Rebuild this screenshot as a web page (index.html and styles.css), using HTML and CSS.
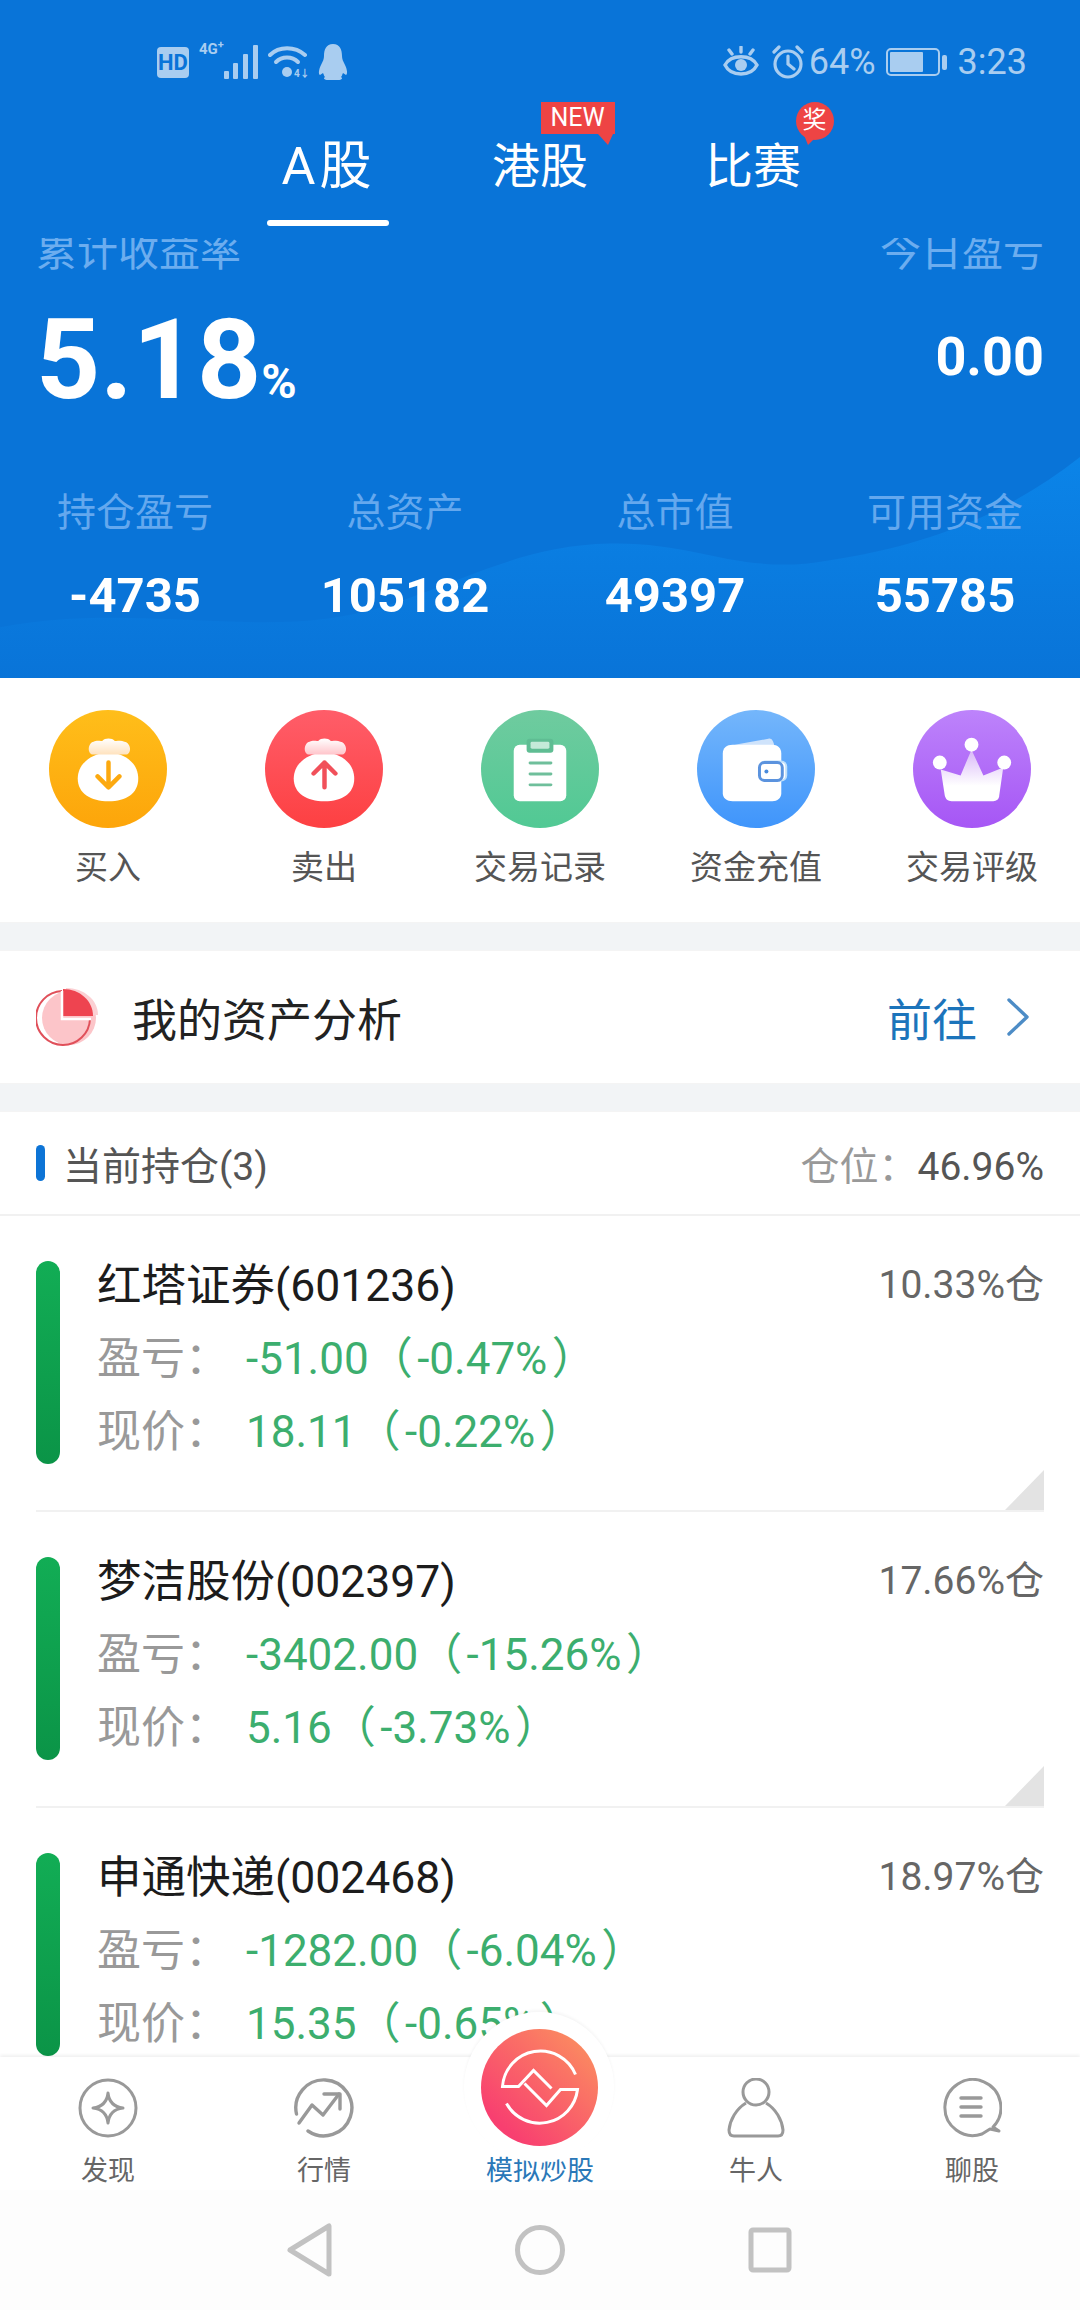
FILE: index.html
```html
<!DOCTYPE html>
<html lang="zh-CN">
<head>
<meta charset="utf-8">
<title>模拟炒股</title>
<link rel="stylesheet" href="styles.css">
</head>
<body>
<div class="app">
  <header class="top">
    <div class="status">
      <div class="status-left">
        <span class="hd">HD</span>
        <div class="net">
          <span class="g4">4G<sup>+</sup></span>
          <svg class="bars" viewBox="0 0 34 34"><g fill="#a9cdf0"><rect x="0" y="26" width="5" height="8" rx="1"/><rect x="9" y="18" width="5" height="16" rx="1"/><rect x="19" y="9" width="5" height="25" rx="1"/><rect x="29" y="0" width="5" height="34" rx="1"/></g></svg>
        </div>
        <svg class="wifi" viewBox="0 0 40 32"><g fill="none" stroke="#a9cdf0" stroke-width="4" stroke-linecap="round"><path d="M2 9C11 0 27 0 37 9"/><path d="M8 16C14 10 24 10 30 16"/></g><circle cx="19" cy="26" r="5" fill="#a9cdf0"/><text x="26" y="31" class="wifi-t">4↓</text></svg>
        <svg class="qq" viewBox="0 0 30 36"><path fill="#a9cdf0" d="M15 0C8 0 6 6 6 12C6 15 5 17 3 21C1 25 0 30 2 31L5 29C6 31 6 32 7 33C5 34 6 36 10 36H20C24 36 25 34 23 33C24 32 24 31 25 29L28 31C30 30 29 25 27 21C25 17 24 15 24 12C24 6 22 0 15 0Z"/></svg>
      </div>
      <div class="status-right">
        <svg class="eye" viewBox="0 0 36 32"><g fill="none" stroke="#a9cdf0" stroke-width="3.4" stroke-linecap="round"><path d="M2 19C8 8 28 8 34 19C28 31 8 31 2 19Z"/><path d="M18 1V6M6 4L9 8M30 4L27 8"/></g><circle cx="18" cy="19" r="6" fill="#a9cdf0"/></svg>
        <svg class="alarm" viewBox="0 0 34 34"><g fill="none" stroke="#a9cdf0" stroke-width="3.2" stroke-linecap="round"><circle cx="17" cy="19" r="13"/><path d="M17 11V19L23 24M3 7L8 2M31 7L26 2"/></g></svg>
        <span class="pct">64%</span>
        <div class="batt"><span class="batt-fill"></span></div>
        <span class="batt-nub"></span>
        <span class="clock">3:23</span>
      </div>
    </div>
    <nav class="tabs">
      <a class="tab tab-on">A股</a>
      <a class="tab">港股<span class="badge-new">NEW</span></a>
      <a class="tab">比赛<span class="badge-prize">奖</span></a>
    </nav>
  </header>

  <main class="scroll">
    <section class="hero">
      <svg class="wave" viewBox="0 0 1080 240" preserveAspectRatio="none">
        <defs><linearGradient id="wv" x1="0" y1="0" x2="0" y2="1"><stop offset="0" stop-color="#0b84e8"/><stop offset="1" stop-color="#0974d8"/></linearGradient></defs>
        <path fill="url(#wv)" d="M0 185C120 160 230 190 330 175C430 160 500 96 610 94C700 92 740 130 830 112C930 96 1010 60 1080 0V240H0Z"/>
      </svg>
      <div class="summary">
        <div class="sum-col">
          <div class="sum-label">累计收益率</div>
          <div class="sum-big">5.18<small>%</small></div>
        </div>
        <div class="sum-col sum-right">
          <div class="sum-label">今日盈亏</div>
          <div class="sum-val">0.00</div>
        </div>
      </div>
      <div class="stats">
        <div class="stat"><span class="stat-label">持仓盈亏</span><b class="stat-val">-4735</b></div>
        <div class="stat"><span class="stat-label">总资产</span><b class="stat-val">105182</b></div>
        <div class="stat"><span class="stat-label">总市值</span><b class="stat-val">49397</b></div>
        <div class="stat"><span class="stat-label">可用资金</span><b class="stat-val">55785</b></div>
      </div>
    </section>

    <section class="actions">
      <div class="action">
        <svg class="action-ic" viewBox="0 0 119 119">
          <defs>
            <linearGradient id="gY" x1="0" y1="0" x2="0" y2="1"><stop offset="0" stop-color="#ffbe1a"/><stop offset="1" stop-color="#fda50a"/></linearGradient>
            <linearGradient id="gK" x1="0" y1="0" x2="0" y2="1"><stop offset="0" stop-color="#fff"/><stop offset="1" stop-color="#ffe2bd"/></linearGradient>
          </defs>
          <circle cx="59.5" cy="59.5" r="59.5" fill="url(#gY)"/>
          <path fill="#fff" d="M60 43C42 43 29 55 29 69C29 84 42 92 60 92C78 92 90 84 90 69C90 55 78 43 60 43Z"/>
          <path fill="url(#gK)" d="M45 32C49 30 52 32 54 31C56 28 64 28 66 31C68 32 72 30 76 32C83 33 84 45 77 45H45C38 45 39 33 45 32Z"/>
          <path fill="none" stroke="#fca90f" stroke-width="4.5" stroke-linecap="round" stroke-linejoin="round" d="M60 53V78M49 67L60 78L71 67"/>
        </svg>
        <span class="action-t">买入</span>
      </div>
      <div class="action">
        <svg class="action-ic" viewBox="0 0 119 119">
          <defs>
            <linearGradient id="gR" x1="0" y1="0" x2="0" y2="1"><stop offset="0" stop-color="#ff5d69"/><stop offset="1" stop-color="#fd4042"/></linearGradient>
            <linearGradient id="gK2" x1="0" y1="0" x2="0" y2="1"><stop offset="0" stop-color="#fff"/><stop offset="1" stop-color="#ffc4ca"/></linearGradient>
          </defs>
          <circle cx="59.5" cy="59.5" r="59.5" fill="url(#gR)"/>
          <path fill="#fff" d="M60 43C42 43 29 55 29 69C29 84 42 92 60 92C78 92 90 84 90 69C90 55 78 43 60 43Z"/>
          <path fill="url(#gK2)" d="M45 32C49 30 52 32 54 31C56 28 64 28 66 31C68 32 72 30 76 32C83 33 84 45 77 45H45C38 45 39 33 45 32Z"/>
          <path fill="none" stroke="#f1505a" stroke-width="4.5" stroke-linecap="round" stroke-linejoin="round" d="M60 78V53M49 64L60 53L71 64"/>
        </svg>
        <span class="action-t">卖出</span>
      </div>
      <div class="action">
        <svg class="action-ic" viewBox="0 0 119 119">
          <defs><linearGradient id="gG" x1="0" y1="0" x2="0" y2="1"><stop offset="0" stop-color="#6fcb9f"/><stop offset="1" stop-color="#51c994"/></linearGradient></defs>
          <circle cx="59.5" cy="59.5" r="59.5" fill="url(#gG)"/>
          <rect x="33" y="35" width="53" height="57" rx="6" fill="#fff"/>
          <rect x="46" y="29" width="27" height="14" rx="3" fill="#5fbd93"/>
          <rect x="50" y="32" width="19" height="7" rx="1.5" fill="#c4ead8"/>
          <g fill="#6fbf9b"><rect x="48" y="52" width="24" height="3" rx="1.5"/><rect x="48" y="63" width="24" height="3" rx="1.5"/><rect x="48" y="74" width="24" height="3" rx="1.5"/></g>
        </svg>
        <span class="action-t">交易记录</span>
      </div>
      <div class="action">
        <svg class="action-ic" viewBox="0 0 119 119">
          <defs>
            <linearGradient id="gB" x1="0" y1="0" x2="0" y2="1"><stop offset="0" stop-color="#74b6fb"/><stop offset="1" stop-color="#3f95fb"/></linearGradient>
          </defs>
          <circle cx="59.5" cy="59.5" r="59.5" fill="url(#gB)"/>
          <path fill="#cfe3fb" d="M38 35L72 29C75 28 77 31 78 36Z"/>
          <path fill="#fff" d="M36 35H76C81 35 85 38 85 44V84C85 89 81 92 76 92H36C30 92 26 89 26 84V44C26 38 30 35 36 35Z"/>
          <rect x="64" y="52" width="26" height="19" rx="5" fill="#fff" stroke="#bfe0fb" stroke-width="2"/>
          <rect x="63" y="53" width="23" height="18" rx="5" fill="#fff" stroke="#5b93de" stroke-width="3"/>
          <circle cx="70" cy="62" r="2" fill="#4a8bdc"/>
        </svg>
        <span class="action-t">资金充值</span>
      </div>
      <div class="action">
        <svg class="action-ic" viewBox="0 0 119 119">
          <defs>
            <linearGradient id="gP" x1="0" y1="0" x2="0" y2="1"><stop offset="0" stop-color="#bd83fb"/><stop offset="1" stop-color="#a656f5"/></linearGradient>
            <linearGradient id="gC" x1="0" y1="0" x2="0" y2="1"><stop offset="0" stop-color="#d8b6f8"/><stop offset="0.7" stop-color="#fff"/></linearGradient>
          </defs>
          <circle cx="59.5" cy="59.5" r="59.5" fill="url(#gP)"/>
          <path fill="url(#gC)" d="M28 60L48 66L59 40L71 66L91 58L87 86C87 90 84 92 81 92H39C35 92 33 90 32 86Z"/>
          <g fill="#fff"><circle cx="59" cy="35" r="7"/><circle cx="27" cy="53" r="7"/><circle cx="92" cy="53" r="7"/></g>
        </svg>
        <span class="action-t">交易评级</span>
      </div>
    </section>

    <div class="gap"></div>

    <section class="analysis">
      <svg class="pie" viewBox="0 0 62 58">
        <circle cx="33" cy="30" r="27" fill="#fcc5c9"/>
        <path fill="none" stroke="#e0505a" stroke-width="2" d="M26 3A27 27 0 1 0 54 31"/>
        <path fill="#fbd0d3" d="M30 0C48 0 62 12 62 27H30Z"/>
        <path fill="#ee4450" d="M27 1C44 1 57 13 57 28H27Z"/>
        <path fill="none" stroke="#fff" stroke-width="2.5" d="M26 3V31H55"/>
      </svg>
      <span class="analysis-t">我的资产分析</span>
      <a class="go">前往
        <svg class="chev" viewBox="0 0 24 38"><path fill="none" stroke="#4d8cc6" stroke-width="3.4" stroke-linecap="round" stroke-linejoin="round" d="M3 2L21 19L3 36"/></svg>
      </a>
    </section>

    <div class="gap"></div>

    <section class="pos-head">
      <span class="pos-mark"></span>
      <span class="pos-title">当前持仓(3)</span>
      <span class="pos-ratio">仓位：<em>46.96%</em></span>
    </section>

    <article class="item">
      <span class="item-bar"></span>
      <div class="item-info">
        <div class="item-name">红塔证券(601236)</div>
        <div class="item-row"><span class="item-k">盈亏：</span><span class="item-v">-51.00（&#8202;-0.47%&#8202;）</span></div>
        <div class="item-row"><span class="item-k">现价：</span><span class="item-v">18.11（&#8202;-0.22%&#8202;）</span></div>
      </div>
      <span class="item-share">10.33%仓</span>
      <span class="item-corner"></span>
    </article>
    <article class="item">
      <span class="item-bar"></span>
      <div class="item-info">
        <div class="item-name">梦洁股份(002397)</div>
        <div class="item-row"><span class="item-k">盈亏：</span><span class="item-v">-3402.00（&#8202;-15.26%&#8202;）</span></div>
        <div class="item-row"><span class="item-k">现价：</span><span class="item-v">5.16（&#8202;-3.73%&#8202;）</span></div>
      </div>
      <span class="item-share">17.66%仓</span>
      <span class="item-corner"></span>
    </article>
    <article class="item">
      <span class="item-bar"></span>
      <div class="item-info">
        <div class="item-name">申通快递(002468)</div>
        <div class="item-row"><span class="item-k">盈亏：</span><span class="item-v">-1282.00（&#8202;-6.04%&#8202;）</span></div>
        <div class="item-row"><span class="item-k">现价：</span><span class="item-v">15.35（&#8202;-0.65%&#8202;）</span></div>
      </div>
      <span class="item-share">18.97%仓</span>
      <span class="item-corner"></span>
    </article>
  </main>

  <footer class="tabbar">
    <div class="nav-item">
      <svg class="nav-ic" viewBox="0 0 60 60"><g fill="none" stroke="#999" stroke-width="3"><circle cx="30" cy="30" r="28"/><path stroke-linejoin="round" d="M30 15C31 24 36 29 45 30C36 31 31 36 30 45C29 36 24 31 15 30C24 29 29 24 30 15Z"/></g></svg>
      <span class="nav-t">发现</span>
    </div>
    <div class="nav-item">
      <svg class="nav-ic" viewBox="0 0 60 60"><g fill="none" stroke="#999" stroke-width="3.4" stroke-linecap="round" stroke-linejoin="round"><path d="M2.5 36A28 28 0 1 1 14 53"/><path d="M5 45L18 27L29 37L45 16"/><path d="M30 16H46V31"/></g></svg>
      <span class="nav-t">行情</span>
    </div>
    <div class="nav-item">
      <span class="nav-ic"></span>
      <span class="nav-t nav-on">模拟炒股</span>
    </div>
    <div class="nav-item">
      <svg class="nav-ic" viewBox="0 0 60 60"><g fill="none" stroke="#999" stroke-width="3" stroke-linejoin="round"><ellipse cx="30" cy="14" rx="13" ry="13"/><path d="M20 25C10 31 4 42 3 52C3 56 5 58 8 58H52C55 58 57 56 57 52C56 42 50 31 40 25"/></g></svg>
      <span class="nav-t">牛人</span>
    </div>
    <div class="nav-item">
      <svg class="nav-ic" viewBox="0 0 60 60"><g fill="none" stroke="#999" stroke-width="3" stroke-linecap="round" stroke-linejoin="round"><path d="M57 53L51 49A28 28 0 1 0 40 56L48 51Z"/><path d="M19 20H39M19 29H39M19 38H39" stroke-width="3.4"/></g></svg>
      <span class="nav-t">聊股</span>
    </div>
    <div class="hub">
      <svg class="hub-ic" viewBox="-58.5 -58.5 117 117">
        <defs><linearGradient id="gH" x1="0.9" y1="0.1" x2="0.2" y2="0.85"><stop offset="0" stop-color="#fb8c60"/><stop offset="1" stop-color="#f83f70"/></linearGradient></defs>
        <circle r="58.5" fill="url(#gH)"/>
        <g fill="none" stroke="#fff" stroke-width="3"><path d="M36 -13A38 38 0 0 0 -37 -1H-21L-6 -17L12 1"/><path d="M-33 16A38 38 0 0 0 38 2H21L7 18L-15 -4"/></g>
      </svg>
    </div>
  </footer>

  <div class="sysnav">
    <svg class="sys-ic" viewBox="0 0 60 60"><path fill="none" stroke="#c2c2c2" stroke-width="5" stroke-linejoin="round" d="M49 6V54L10 30Z"/></svg>
    <svg class="sys-ic" viewBox="0 0 60 60"><circle cx="30" cy="30" r="22.5" fill="none" stroke="#c2c2c2" stroke-width="5"/></svg>
    <svg class="sys-ic" viewBox="0 0 60 60"><rect x="11" y="10" width="38" height="40" rx="2" fill="none" stroke="#c2c2c2" stroke-width="5"/></svg>
  </div>
</div>
</body>
</html>
```

FILE: styles.css
```css
* { box-sizing: border-box; }
html, body { margin: 0; padding: 0; }
body { width: 1080px; height: 2310px; overflow: hidden; background: #fff; font-family: Roboto, "Noto Sans CJK SC", sans-serif; }
.app { width: 1080px; height: 2310px; display: flex; flex-direction: column; overflow: hidden; }

.top { height: 238px; flex: none; background: #0974d8; position: relative; z-index: 2; }
.status { height: 90px; padding: 34px 53px 0 157px; display: flex; justify-content: space-between; align-items: center; color: #a9cdf0; }
.status-left, .status-right { display: flex; align-items: center; }
.hd { width: 32px; height: 31px; border-radius: 4px; background: #a9cdf0; color: #0974d8; font: 700 22px/31px Roboto, sans-serif; text-align: center; }
.net { position: relative; width: 69px; height: 34px; margin-left: 0; }
.g4 { position: absolute; left: 10px; top: -4px; font: 700 15px/16px Roboto, sans-serif; color: #a9cdf0; }
.g4 sup { font-size: 11px; line-height: 0; }
.bars { position: absolute; left: 35px; top: 0; width: 34px; height: 34px; }
.wifi { width: 40px; height: 32px; margin-left: 10px; }
.wifi-t { font: 700 10px Roboto, "Noto Sans CJK SC", sans-serif; fill: #a9cdf0; }
.qq { width: 30px; height: 36px; margin-left: 10px; }
.eye { width: 36px; height: 32px; }
.alarm { width: 34px; height: 34px; margin-left: 12px; }
.pct { font: 400 36px/40px Roboto, sans-serif; margin-left: 4px; }
.batt { width: 54px; height: 28px; border: 2px solid #a9cdf0; border-radius: 5px; padding: 2px; margin-left: 10px; }
.batt-fill { display: block; width: 33px; height: 20px; background: #a9cdf0; border-radius: 1px; }
.batt-nub { width: 5px; height: 15px; background: #a9cdf0; border-radius: 2px; margin-left: 2px; }
.clock { font: 400 36px/40px Roboto, sans-serif; margin-left: 11px; }

.tabs { display: flex; justify-content: center; height: 148px; }
.tab { position: relative; width: 213px; height: 136px; padding-top: 47px; text-align: center; font-size: 48px; line-height: 60px; color: #fff; }
.tab-on { padding-left: 3px; font-size: 52px; letter-spacing: 4px; }
.tab-on::after { content: ""; position: absolute; left: 46px; right: 45px; bottom: 0; height: 6px; border-radius: 3px; background: #fff; }
.badge-new { position: absolute; left: 107px; top: 12px; width: 74px; height: 32px; background: #ee4444; color: #fff; font: 400 25px/32px Roboto, sans-serif; text-align: center; }
.badge-new::after { content: ""; position: absolute; right: 2px; top: 32px; border-top: 11px solid #ee4444; border-left: 10px solid transparent; border-right: 5px solid transparent; }
.badge-prize { position: absolute; left: 149px; top: 12px; width: 38px; height: 38px; border-radius: 50%; background: #ee4444; color: #fff; font-size: 24px; line-height: 36px; text-align: center; }
.badge-prize::after { content: ""; position: absolute; left: 8px; top: 33px; border-top: 10px solid #ee4444; border-left: 4px solid transparent; border-right: 10px solid transparent; }

.scroll { flex: 1; min-height: 0; overflow: hidden; background: #fff; }
.hero { position: relative; display: flow-root; height: 440px; background: #0974d8; }
.wave { position: absolute; left: 0; bottom: 0; width: 1080px; height: 221px; }
.summary { position: relative; display: flex; justify-content: space-between; padding: 0 36px; margin-top: -5px; }
.sum-col { display: flex; flex-direction: column; }
.sum-right { align-items: flex-end; }
.sum-label { font-size: 41px; line-height: 38px; color: #6cadef; }
.sum-big { margin-top: 39px; font-weight: 700; font-size: 112px; line-height: 100px; color: #fff; }
.sum-big small { font-size: 48px; font-weight: 700; line-height: 0; }
.sum-val { margin-top: 56px; font-weight: 700; font-size: 54px; line-height: 60px; color: #fff; }
.stats { position: relative; display: grid; grid-template-columns: repeat(4, 1fr); margin-top: 80px; }
.stat { display: flex; flex-direction: column; align-items: center; gap: 30px; }
.stat-label { font-size: 39px; line-height: 46px; color: #64a8ee; }
.stat-val { font-size: 49px; line-height: 60px; color: #fff; font-weight: 700; }

.actions { display: grid; grid-template-columns: repeat(5, 1fr); padding: 32px 0 34px; background: #fff; }
.action { display: flex; flex-direction: column; align-items: center; gap: 20px; }
.action-ic { width: 118px; height: 118px; display: block; }
.action-t { font-size: 33px; line-height: 40px; color: #555; }

.gap { height: 29px; background: #f2f4f6; border-top: 1px solid #f4f4f4; border-bottom: 1px solid #f4f4f4; }
.analysis { height: 132px; display: flex; align-items: center; padding: 0 36px; background: #fff; }
.pie { width: 62px; height: 58px; flex: none; }
.analysis-t { margin-left: 34px; font-size: 45px; color: #222; }
.go { margin-left: auto; display: flex; align-items: center; gap: 29px; font-size: 45px; color: #1c74bb; padding-right: 14px; }
.chev { width: 24px; height: 38px; }

.pos-head { height: 104px; display: flex; align-items: center; padding: 0 36px; border-bottom: 2px solid #f1f1f1; background: #fff; }
.pos-mark { width: 9px; height: 36px; border-radius: 5px; background: #0d74d6; }
.pos-title { margin-left: 18px; font-size: 39px; color: #555; }
.pos-ratio { margin-left: auto; font-size: 39px; color: #999; }
.pos-ratio em { font-style: normal; color: #555; }

.item { position: relative; height: 296px; margin: 0 36px; padding-top: 45px; display: flex; align-items: flex-start; border-bottom: 2px solid #f1f1f1; }
.item-bar { width: 24px; height: 203px; flex: none; border-radius: 12px; background: linear-gradient(#12ad55, #0b9447); }
.item-info { margin: 1px 0 0 37px; display: flex; flex-direction: column; gap: 25px; }
.item-name { font-size: 44.5px; line-height: 48px; color: #1c1c1c; }
.item-row { display: flex; font-size: 44px; line-height: 48px; }
.item-k { width: 149px; color: #999; flex: none; }
.item-v { color: #3cae6e; }
.item-share { margin-left: auto; font-size: 39px; line-height: 48px; color: #666; }
.item-corner { position: absolute; right: 0; bottom: 0; width: 39px; height: 40px; background: #e3e3e3; clip-path: polygon(100% 0, 100% 100%, 0 100%); }

.tabbar { position: relative; z-index: 3; height: 133px; flex: none; padding-top: 21px; display: grid; grid-template-columns: repeat(5, 1fr); background: #fff; box-shadow: 0 -2px 3px rgba(0, 0, 0, .06); }
.nav-item { display: flex; flex-direction: column; align-items: center; gap: 17px; }
.nav-ic { width: 60px; height: 60px; display: block; }
.nav-t { font-size: 27px; line-height: 32px; color: #666; white-space: nowrap; }
.nav-on { color: #2a78b8; }
.hub { position: absolute; left: 464px; top: -45px; width: 150px; height: 150px; border-radius: 50%; background: #fff; display: flex; align-items: center; justify-content: center; box-shadow: 0 -2px 3px rgba(0, 0, 0, .04); clip-path: inset(-6px -6px 0 -6px); }
.hub-ic { display: block; width: 117px; height: 117px; }

.sysnav { flex: none; height: 120px; display: flex; align-items: center; justify-content: center; gap: 170px; background: #fdfdfd; }
.sys-ic { width: 60px; height: 60px; display: block; }
```
